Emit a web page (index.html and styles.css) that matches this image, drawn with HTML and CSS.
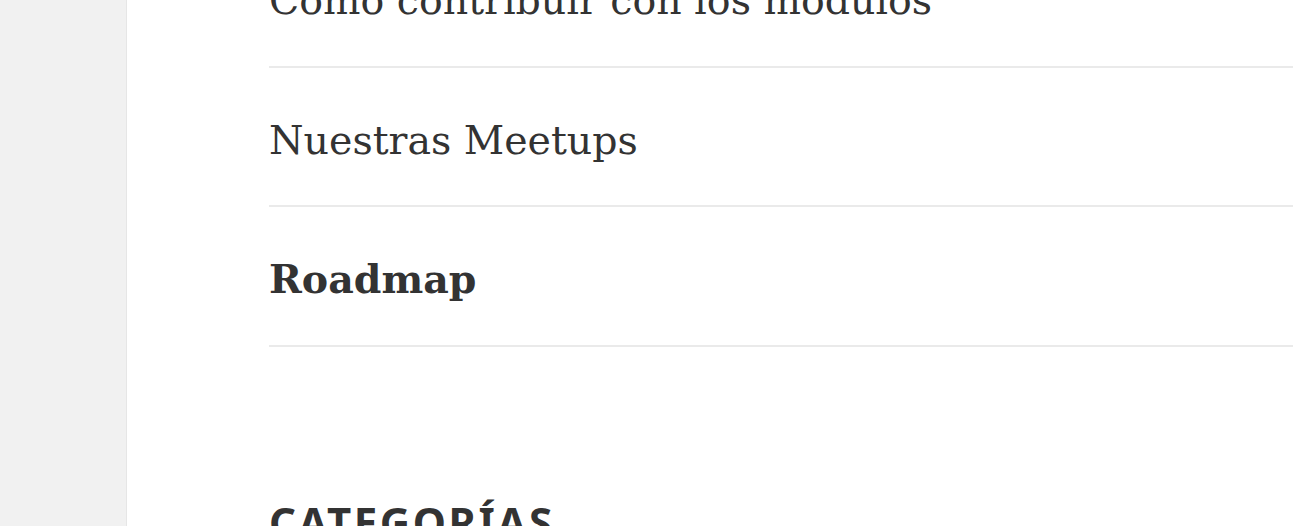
FILE: index.html
```html
<!DOCTYPE html>
<html lang="es">
<head>
<meta charset="utf-8">
<title>Sidebar</title>
<link rel="stylesheet" href="styles.css">
</head>
<body>
<div class="page">
  <div class="gutter"></div>
  <div class="panel">
    <section class="widget">
      <ul class="menu">
        <li class="item"><a href="#">Cómo contribuir con los módulos</a></li>
        <li class="item"><a href="#">Nuestras Meetups</a></li>
        <li class="item current"><a href="#">Roadmap</a></li>
      </ul>
    </section>
    <section class="widget">
      <h2 class="widget-title">Categorías</h2>
    </section>
  </div>
</div>
</body>
</html>
```
FILE: styles.css
```css
html, body {
  margin: 0;
  padding: 0;
  height: 100%;
  overflow: hidden;
}
body {
  background: #f1f1f1;
  color: #333333;
}
.page {
  display: flex;
  min-height: 100%;
}
.gutter {
  width: 127px;
  flex: none;
  background: #f1f1f1;
}
.panel {
  flex: 1;
  background: #ffffff;
  box-shadow: 0 0 1px rgba(0, 0, 0, 0.25);
  padding-left: 142px;
}
.widget {
  margin: 0;
}
.menu {
  list-style: none;
  margin: -72px 0 0 0;
  padding: 0;
}
.item {
  font-family: "DejaVu Serif", "Liberation Serif", serif;
  font-size: 39.5px;
  line-height: 56px;
  padding: 44px 0 37.5px;
  border-bottom: 2px solid #eaeaea;
}
.item a {
  color: #333333;
  text-decoration: none;
}
.item.current a {
  font-weight: 700;
}
.widget-title {
  margin: 150px 0 0 0;
  font-family: "Noto Sans", "Open Sans", sans-serif;
  font-weight: 700;
  font-size: 42px;
  letter-spacing: 2.5px;
  text-transform: uppercase;
  color: #333333;
  line-height: 1.2;
}
```
